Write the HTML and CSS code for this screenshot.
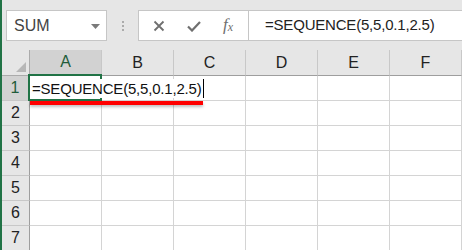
FILE: index.html
```html
<!DOCTYPE html>
<html>
<head>
  <meta charset="UTF-8">
  <title>Sheet</title>
  <link rel="stylesheet" href="styles.css">
</head>
<body>
  <div id="app">
    <div id="toolbar">
      <div class="namebox">
        <span class="name">SUM</span>
        <svg class="drop" width="9" height="5" viewBox="0 0 9 5"><path d="M0 0h9L4.5 5z" fill="#7a7a7a"/></svg>
      </div>
      <div class="grip"><i></i><i></i><i></i></div>
      <div class="fbtns">
        <svg width="12" height="12" viewBox="0 0 12 12"><path d="M1.5 1.5l9 9M10.5 1.5l-9 9" stroke="#6f6f6f" stroke-width="1.8"/></svg>
        <svg width="14" height="12" viewBox="0 0 14 12"><path d="M1 6.5l4 4L13 2" stroke="#6f6f6f" stroke-width="2.2" fill="none"/></svg>
        <span class="fx">f<sub>x</sub></span>
      </div>
      <div class="finput">=SEQUENCE(5,5,0.1,2.5)</div>
    </div>

    <div id="sheet">
      <div class="corner">
        <svg width="10" height="10" viewBox="0 0 10 10"><path d="M10 0v10H0z" fill="#b7b7b7"/></svg>
      </div>
      <div class="colhead active">A</div>
      <div class="colhead">B</div>
      <div class="colhead">C</div>
      <div class="colhead">D</div>
      <div class="colhead">E</div>
      <div class="colhead">F</div>

      <div class="rowhead active">1</div>
      <div class="cell editing">
        <span class="entry">=SEQUENCE(5,5,0.1,2.5)<b class="caret"></b></span>
        <div class="select"></div>
        <div class="mark"></div>
      </div>
      <div class="cell"></div><div class="cell"></div><div class="cell"></div><div class="cell"></div><div class="cell"></div>

      <div class="rowhead">2</div>
      <div class="cell"></div><div class="cell"></div><div class="cell"></div><div class="cell"></div><div class="cell"></div><div class="cell"></div>
      <div class="rowhead">3</div>
      <div class="cell"></div><div class="cell"></div><div class="cell"></div><div class="cell"></div><div class="cell"></div><div class="cell"></div>
      <div class="rowhead">4</div>
      <div class="cell"></div><div class="cell"></div><div class="cell"></div><div class="cell"></div><div class="cell"></div><div class="cell"></div>
      <div class="rowhead">5</div>
      <div class="cell"></div><div class="cell"></div><div class="cell"></div><div class="cell"></div><div class="cell"></div><div class="cell"></div>
      <div class="rowhead">6</div>
      <div class="cell"></div><div class="cell"></div><div class="cell"></div><div class="cell"></div><div class="cell"></div><div class="cell"></div>
      <div class="rowhead">7</div>
      <div class="cell"></div><div class="cell"></div><div class="cell"></div><div class="cell"></div><div class="cell"></div><div class="cell"></div>
    </div>
  </div>
</body>
</html>
```

FILE: styles.css
```css
body, html {
  margin: 0;
  padding: 0;
  height: 100%;
  overflow: hidden;
  background: #fff;
  font-family: "Liberation Sans", Arial, sans-serif;
}

#app {
  width: 462px;
  height: 250px;
  border-left: 2px solid #217346;
  box-sizing: border-box;
  overflow: hidden;
}

#toolbar {
  height: 50px;
  background-color: #e6e6e6;
  display: flex;
  align-items: flex-start;
  padding: 10px 0 0 4px;
  box-sizing: border-box;
}

.namebox {
  width: 101px;
  height: 31px;
  box-sizing: border-box;
  background: #fff;
  border: 1px solid #c6c6c6;
  display: flex;
  align-items: center;
  justify-content: space-between;
  padding: 0 6px 0 7px;
}

.name {
  font-size: 16px;
  color: #444;
}

.drop {
  margin-top: 1px;
}

.grip {
  width: 31px;
  height: 31px;
  display: flex;
  flex-direction: column;
  align-items: center;
  justify-content: center;
  gap: 2px;
}

.grip i {
  width: 2px;
  height: 2px;
  background: #ababab;
}

.fbtns {
  width: 111px;
  height: 31px;
  box-sizing: border-box;
  background: #fff;
  border: 1px solid #c6c6c6;
  display: flex;
  align-items: center;
  padding: 0 0 0 14px;
  gap: 22px;
}

.fx {
  font-family: "Liberation Serif", serif;
  font-style: italic;
  font-size: 17px;
  color: #6f6f6f;
  margin-left: 0;
  margin-top: -2px;
}

.fx sub {
  font-size: 12px;
  vertical-align: -1px;
}

.finput {
  flex: 1;
  height: 31px;
  box-sizing: border-box;
  background: #fff;
  border: 1px solid #c6c6c6;
  border-right: none;
  margin-left: -1px;
  padding: 5px 0 0 16px;
  font-size: 15px;
  letter-spacing: -0.2px;
  color: #222;
  white-space: nowrap;
}

#sheet {
  display: grid;
  grid-template-columns: 28px repeat(6, 72px);
  grid-template-rows: 26px repeat(7, 25px);
}

.corner, .colhead, .rowhead, .cell {
  box-sizing: border-box;
}

.corner {
  background: #e6e6e6;
  border-right: 1px solid #ababab;
  border-bottom: 1px solid #ababab;
  display: flex;
  align-items: flex-end;
  justify-content: flex-end;
  padding: 0 3px 3px 0;
}

.colhead {
  background: #e6e6e6;
  border-right: 1px solid #c8c8c8;
  border-bottom: 1px solid #9e9e9e;
  display: flex;
  align-items: center;
  justify-content: center;
  font-size: 16px;
  color: #222;
}

.colhead.active {
  background: #d2d2d2;
  border-bottom: 2px solid #217346;
  color: #1f5c3a;
}

.rowhead {
  background: #e6e6e6;
  border-right: 1px solid #9e9e9e;
  border-bottom: 1px solid #c8c8c8;
  display: flex;
  align-items: center;
  justify-content: center;
  font-size: 16px;
  color: #222;
}

.rowhead.active {
  background: #d2d2d2;
  border-right: 2px solid #217346;
  color: #1f5c3a;
}

.cell {
  border-right: 1px solid #d4d4d4;
  border-bottom: 1px solid #d4d4d4;
  background: #fff;
}

.cell.editing {
  position: relative;
  z-index: 2;
  display: flex;
  align-items: center;
  white-space: nowrap;
}

.entry {
  position: relative;
  z-index: 5;
  padding: 0 2px;
  font-size: 15px;
  letter-spacing: -0.2px;
  color: #111;
  background: #fff;
  display: flex;
  align-items: center;
}

.caret {
  width: 1px;
  height: 19px;
  background: #000;
  margin-left: 2px;
}

.select {
  position: absolute;
  left: -2px;
  top: -2px;
  width: 74px;
  height: 27px;
  border: 2px solid #217346;
  box-sizing: border-box;
  z-index: 3;
}

.mark {
  position: absolute;
  left: 0;
  top: 25px;
  width: 173px;
  height: 4px;
  background: #ff0000;
  box-shadow: 0 2px 3px rgba(0, 0, 0, 0.25);
  z-index: 6;
}
```
